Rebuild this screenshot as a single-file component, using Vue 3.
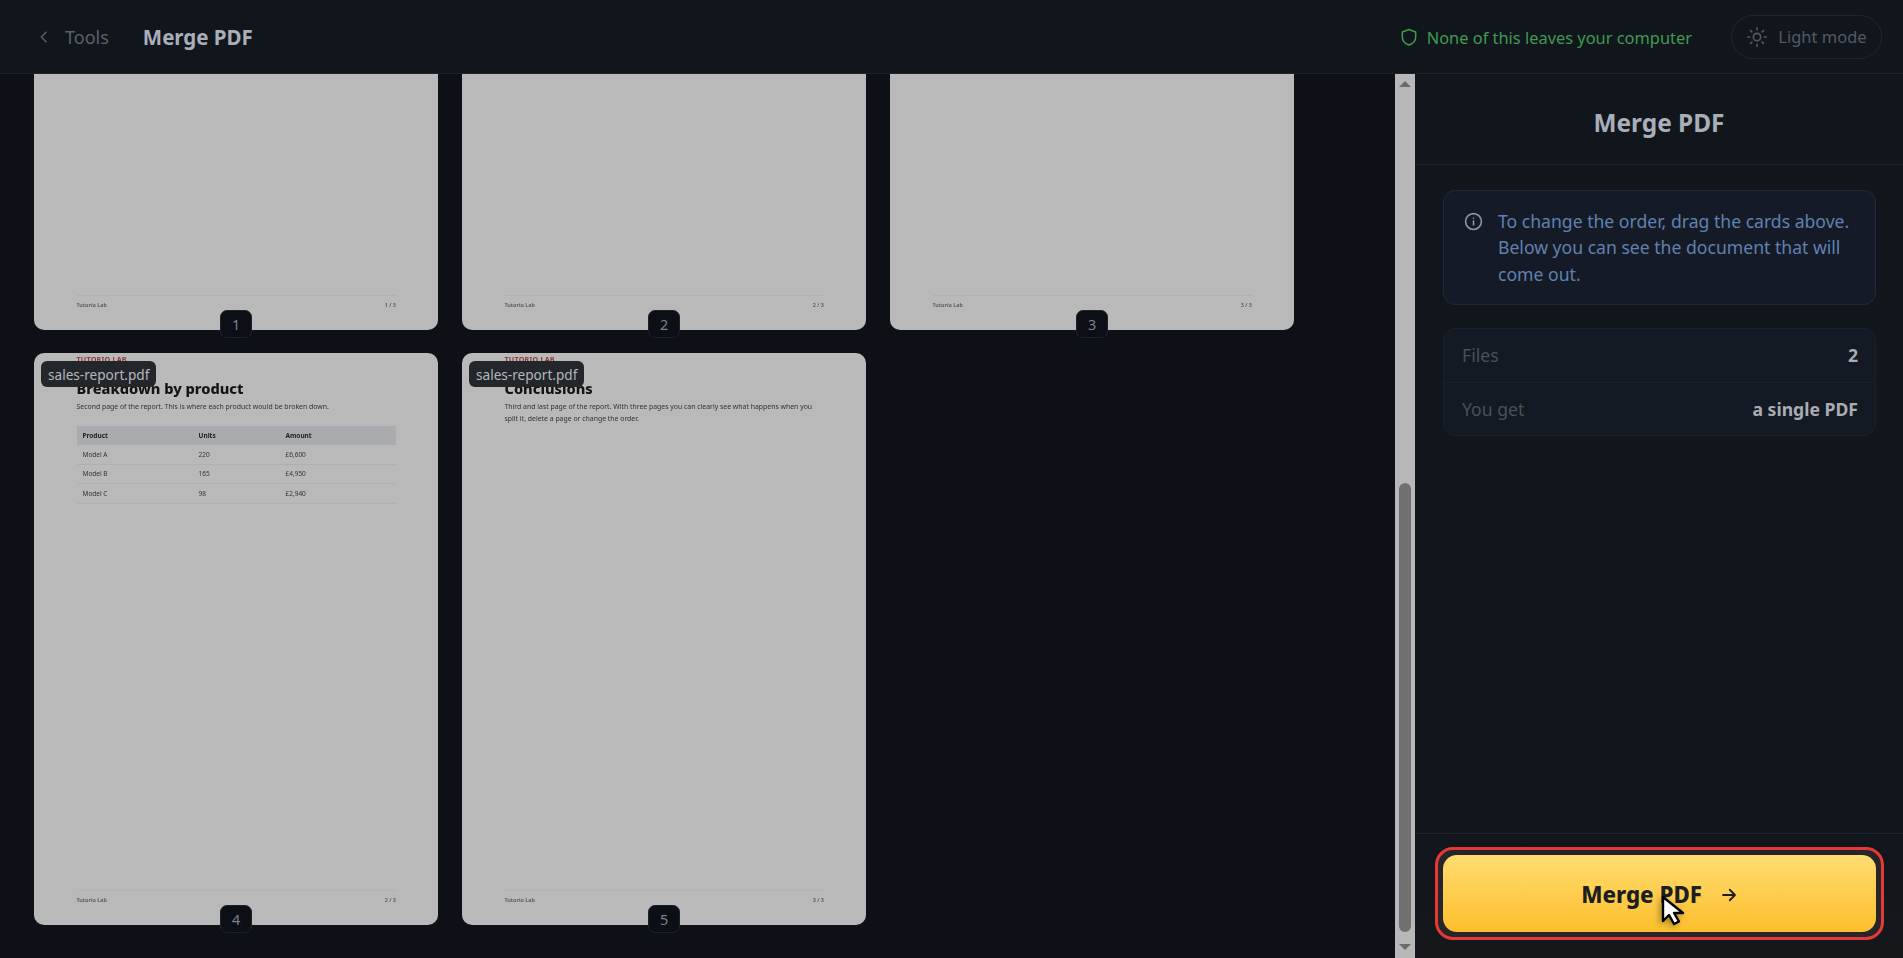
<template>
  <div class="app">
    <header class="topbar">
      <div class="top-left">
        <a class="back">
          <svg width="16" height="16" viewBox="0 0 24 24" fill="none" stroke="currentColor" stroke-width="2.2" stroke-linecap="round" stroke-linejoin="round"><path d="M15 5l-7 7 7 7" /></svg>
          <span>Tools</span>
        </a>
        <h1 class="top-title">Merge PDF</h1>
      </div>
      <div class="top-right">
        <div class="privacy">
          <svg width="20" height="20" viewBox="0 0 24 24" fill="none" stroke="currentColor" stroke-width="1.800" stroke-linecap="round" stroke-linejoin="round"><path d="M12 3l8 3v6c0 5-3.500 8-8 9.500-4.500-1.500-8-4.500-8-9.500V6z" /></svg>
          <span>None of this leaves your computer</span>
        </div>
        <button class="theme-btn">
          <svg width="22" height="22" viewBox="0 0 24 24" fill="none" stroke="currentColor" stroke-width="1.800" stroke-linecap="round"><circle cx="12" cy="12" r="4" /><path d="M12 2v2M12 20v2M2 12h2M20 12h2M5 5l1.400 1.400M17.600 17.600L19 19M5 19l1.400-1.400M17.600 6.400L19 5" /></svg>
          <span>Light mode</span>
        </button>
      </div>
    </header>

    <div class="body">
      <main class="pane">
        <div class="grid">
          <article v-for="page in pages" :key="page.n" class="card">
            <div v-if="page.file" class="file-tag">{{ page.file }}</div>
            <div class="sheet">
              <template v-if="page.title">
                <div class="brand">TUTORIO LAB</div>
                <h2 class="sheet-title">{{ page.title }}</h2>
                <p class="sheet-text">{{ page.text }}</p>
                <table v-if="page.table" class="sheet-table">
                  <thead>
                    <tr><th>Product</th><th>Units</th><th>Amount</th></tr>
                  </thead>
                  <tbody>
                    <tr v-for="row in rows" :key="row[0]">
                      <td>{{ row[0] }}</td><td>{{ row[1] }}</td><td>{{ row[2] }}</td>
                    </tr>
                  </tbody>
                </table>
              </template>
              <div class="sheet-foot">
                <span>Tutorio Lab</span>
                <span>{{ page.foot }}</span>
              </div>
            </div>
            <div class="num">{{ page.n }}</div>
          </article>
        </div>
      </main>

      <div class="scrollbar">
        <div class="sb-btn"><span class="arrow-up"></span></div>
        <div class="sb-track"><div class="sb-thumb"></div></div>
        <div class="sb-btn"><span class="arrow-down"></span></div>
      </div>

      <aside class="side">
        <h2 class="side-title">Merge PDF</h2>
        <div class="side-body">
          <div class="info">
            <svg class="info-icon" width="19" height="19" viewBox="0 0 24 24" fill="none" stroke="currentColor" stroke-width="2" stroke-linecap="round"><circle cx="12" cy="12" r="10" /><path d="M12 11.500v5M12 7.800v.2" /></svg>
            <p>To change the order, drag the cards above. Below you can see the document that will come out.</p>
          </div>
          <div class="summary">
            <div class="sum-row"><span>Files</span><b>2</b></div>
            <div class="sum-row"><span>You get</span><b>a single PDF</b></div>
          </div>
        </div>
        <div class="side-foot">
          <div class="highlight">
            <button class="merge-btn">
              <span>Merge PDF</span>
              <svg width="18" height="18" viewBox="0 0 24 24" fill="none" stroke="currentColor" stroke-width="2.400" stroke-linecap="round" stroke-linejoin="round"><path d="M4 12h16M13 5l7 7-7 7" /></svg>
              <svg class="cursor" width="30" height="36" viewBox="0 0 30 36"><path d="M3 2v24l6-6 5 9 5-2.500-5-8.500h9z" fill="#fff" stroke="#000" stroke-width="2.400" stroke-linejoin="round" /></svg>
            </button>
          </div>
        </div>
      </aside>
    </div>
  </div>
</template>

<script setup>
const rows = [
  ['Model A', '220', '£6,600'],
  ['Model B', '165', '£4,950'],
  ['Model C', '98', '£2,940']
]

const pages = [
  { n: 1, foot: '1 / 3' },
  { n: 2, foot: '2 / 3' },
  { n: 3, foot: '3 / 3' },
  {
    n: 4,
    file: 'sales-report.pdf',
    foot: '2 / 3',
    title: 'Breakdown by product',
    text: 'Second page of the report. This is where each product would be broken down.',
    table: true
  },
  {
    n: 5,
    file: 'sales-report.pdf',
    foot: '3 / 3',
    title: 'Conclusions',
    text: 'Third and last page of the report. With three pages you can clearly see what happens when you split it, delete a page or change the order.'
  }
]
</script>

<style>
html, body {
  margin: 0;
  height: 100%;
  overflow: hidden;
  background: #0d1017;
}
</style>

<style scoped>
.app {
  height: 958px;
  display: flex;
  flex-direction: column;
  font-family: "Noto Sans", "Open Sans", sans-serif;
  overflow: hidden;
}

.topbar {
  height: 73px;
  flex: none;
  display: flex;
  align-items: center;
  justify-content: space-between;
  padding: 0 21px 0 36px;
  background: #11161d;
  border-bottom: 1px solid #1d222a;
}

.top-left {
  display: flex;
  align-items: center;
  padding-top: 1px;
}

.back {
  display: flex;
  align-items: center;
  gap: 13px;
  color: #59616b;
  font-size: 18px;
}

.top-title {
  margin: 0 0 0 34px;
  font-size: 20.500px;
  font-weight: 700;
  color: #a9afb9;
}

.top-right {
  display: flex;
  align-items: center;
  gap: 39px;
}

.privacy {
  display: flex;
  align-items: center;
  gap: 8px;
  padding-top: 1px;
  color: #3f9a52;
  font-size: 16.400px;
}

.theme-btn {
  width: 151px;
  height: 44px;
  display: flex;
  align-items: center;
  justify-content: center;
  gap: 10px;
  padding: 0;
  background: transparent;
  border: 1px solid #1f252e;
  border-radius: 22px;
  color: #525a65;
  font: inherit;
  font-size: 16.500px;
}

.body {
  flex: 1;
  min-height: 0;
  display: flex;
}

.pane {
  width: 1395px;
  flex: none;
  overflow: hidden;
  background: #0d1017;
}

.grid {
  display: grid;
  grid-template-columns: repeat(3, 404px);
  gap: 23px 24px;
  margin: -316px 0 0 34px;
}

.card {
  position: relative;
  height: 572px;
  background: #b9b9b9;
  border-radius: 10px;
}

.file-tag {
  position: absolute;
  top: 8px;
  left: 7px;
  z-index: 2;
  height: 26px;
  line-height: 27px;
  padding: 0 7px;
  background: #23262b;
  border-radius: 6px;
  color: #b5b8bb;
  font-size: 13.600px;
}

.num {
  position: absolute;
  left: 186px;
  bottom: -8px;
  width: 32px;
  height: 28px;
  box-sizing: border-box;
  display: flex;
  align-items: center;
  justify-content: center;
  background: #0c1016;
  border: 1px solid #1c222b;
  border-radius: 7px;
  color: #7c8288;
  font-size: 14.400px;
}

.sheet {
  height: 100%;
  box-sizing: border-box;
  padding: 1px 42px 0 42.500px;
  position: relative;
  filter: blur(0.5px);
  color: #1c1c1c;
  display: flex;
  flex-direction: column;
}

.brand {
  color: #8f3a35;
  font-size: 7.200px;
  font-weight: 700;
  letter-spacing: 0.2px;
  line-height: 10px;
}

.sheet-title {
  margin: 12.500px 0 0;
  font-size: 14.600px;
  font-weight: 800;
  line-height: 22px;
  color: #141414;
}

.sheet-text {
  margin: 2px 0 0;
  max-width: 312px;
  font-size: 6.900px;
  line-height: 12.700px;
  color: #333;
}

.sheet-table {
  margin-top: 13px;
  width: 100%;
  border-collapse: collapse;
  font-size: 6.500px;
  table-layout: fixed;
}

.sheet-table th {
  height: 19px;
  padding: 0 0 0 6px;
  text-align: left;
  font-weight: 700;
  background: #a9abae;
  color: #222;
}

.sheet-table td {
  height: 18.500px;
  padding: 0 0 0 6px;
  border-bottom: 1px solid #b0b0b0;
  color: #333;
}

.sheet-table th:nth-child(1) {
  width: 110px;
}

.sheet-table th:nth-child(2) {
  width: 81px;
}

.sheet-foot {
  margin-top: auto;
  margin-bottom: 15px;
  height: 14px;
  padding-top: 5px;
  border-top: 1px solid #b1b1b1;
  display: flex;
  justify-content: space-between;
  font-size: 5.500px;
  font-weight: 600;
  color: #555;
}

.scrollbar {
  width: 20px;
  flex: none;
  display: flex;
  flex-direction: column;
  background: #b8b8b8;
}

.sb-btn {
  height: 20px;
  flex: none;
  display: flex;
  align-items: center;
  justify-content: center;
}

.arrow-up,
.arrow-down {
  width: 0;
  height: 0;
  border-left: 6px solid transparent;
  border-right: 6px solid transparent;
}

.arrow-up {
  border-bottom: 6px solid #6b6b6b;
}

.arrow-down {
  margin-bottom: 2px;
  border-top: 6px solid #6b6b6b;
}

.sb-track {
  flex: 1;
  padding: 389px 4px 0;
  box-sizing: border-box;
}

.sb-thumb {
  height: 449px;
  background: #707070;
  border-radius: 6px;
}

.side {
  flex: 1;
  min-width: 0;
  display: flex;
  flex-direction: column;
  background: #11161d;
}

.side-title {
  height: 91px;
  flex: none;
  box-sizing: border-box;
  margin: 0;
  padding-top: 6px;
  display: flex;
  align-items: center;
  justify-content: center;
  font-size: 24.400px;
  font-weight: 700;
  color: #a9afb9;
  border-bottom: 1px solid #1d222a;
}

.side-body {
  flex: 1;
  min-height: 0;
  padding: 25px 27px 0 28px;
  display: flex;
  flex-direction: column;
  gap: 23px;
}

.info {
  display: flex;
  gap: 15px;
  height: 115px;
  box-sizing: border-box;
  padding: 17px 20px 0 20px;
  background: #141b27;
  border: 1px solid #1e2a3b;
  border-radius: 12px;
}

.info-icon {
  flex: none;
  color: #8b97a8;
  margin-top: 4px;
}

.info p {
  margin: 0;
  font-size: 17.600px;
  line-height: 26.400px;
  color: #6081b0;
}

.summary {
  height: 108px;
  box-sizing: border-box;
  background: #131a23;
  border: 1px solid #1a212a;
  border-radius: 12px;
  display: flex;
  flex-direction: column;
}

.sum-row {
  flex: 1;
  display: flex;
  align-items: center;
  justify-content: space-between;
  padding: 0 17px 0 18px;
  font-size: 17.600px;
  color: #4a5058;
}

.sum-row + .sum-row {
  border-top: 1px solid #1a212a;
}

.sum-row b {
  color: #a9adb2;
  font-weight: 700;
}

.side-foot {
  height: 125px;
  flex: none;
  box-sizing: border-box;
  border-top: 1px solid #1d222a;
  padding: 13px 19px 0 20px;
  background: linear-gradient(#11161d, #15171a);
}

.highlight {
  height: 93px;
  box-sizing: border-box;
  padding: 5px;
  border: 3px solid #e53935;
  border-radius: 18px;
  background: #26262a;
}

.merge-btn {
  position: relative;
  width: 100%;
  height: 77px;
  display: flex;
  align-items: center;
  justify-content: center;
  gap: 18px;
  padding: 2px 0 0;
  border: none;
  border-radius: 14px;
  background: linear-gradient(#ffdc70, #fcbf2d);
  color: #1c1e22;
  font: inherit;
  font-size: 22.300px;
  font-weight: 800;
}

.cursor {
  position: absolute;
  left: 217px;
  top: 40px;
  filter: drop-shadow(-2px 2px 3px rgba(0, 0, 0, 0.35));
}
</style>
